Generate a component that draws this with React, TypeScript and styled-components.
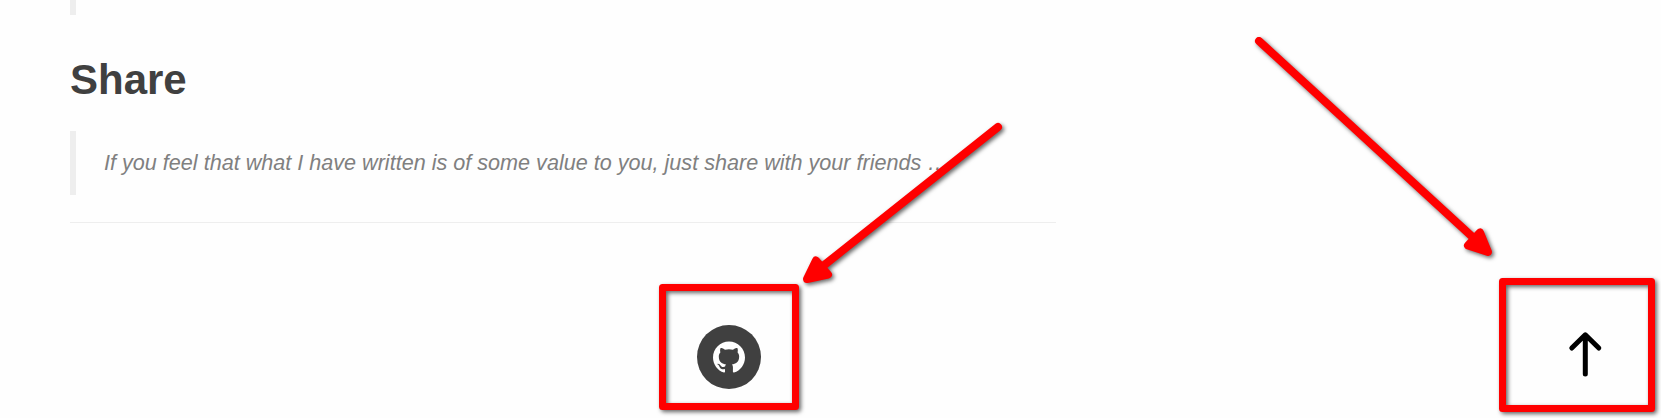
import React from "react";
import styled, { createGlobalStyle } from "styled-components";

const GlobalStyle = createGlobalStyle`
  body {
    margin: 0;
    background: #fefefe;
    color: #404040;
    font-family: "Liberation Sans", Arial, sans-serif;
    overflow: hidden;
  }
`;

const Page = styled.div`
  position: relative;
  box-sizing: border-box;
  height: 418px;
  padding-left: 70px;
  overflow: hidden;
`;

const Article = styled.main`
  display: flex;
  flex-direction: column;
  width: 986px;
`;

const Quote = styled.blockquote<{ $height: number }>`
  display: flex;
  align-items: center;
  box-sizing: border-box;
  height: ${(p) => p.$height}px;
  margin: 0;
  padding: 0 0 0 28px;
  border-left: 6px solid #eee;
  color: #808080;
  font-size: 21.6px;
  font-style: italic;
  line-height: 32px;
  white-space: nowrap;
`;

const Heading = styled.h1`
  margin: 40px 0 27px;
  font-size: 42px;
  line-height: 49px;
  font-weight: 700;
`;

const Divider = styled.hr`
  width: 100%;
  height: 1px;
  margin: 27px 0 0;
  border: 0;
  background: #eee;
`;

const Footer = styled.footer`
  display: flex;
  justify-content: center;
  padding: 102px 0 0 332px;
  width: 654px;
`;

const SocialLink = styled.a`
  display: flex;
  align-items: center;
  justify-content: center;
  width: 64px;
  height: 64px;
  border-radius: 50%;
  background: #404040;
  color: #fff;
`;

const TopButton = styled.a`
  position: absolute;
  left: 1565px;
  top: 328px;
  display: block;
  width: 40px;
  height: 52px;
`;

const Annotations = styled.svg`
  position: absolute;
  inset: 0;
  filter: drop-shadow(2px 2px 2px rgba(0, 0, 0, 0.6));
  pointer-events: none;
`;

const GithubMark = () => (
  <svg width="32" height="32" viewBox="0 0 24 24" fill="currentColor">
    <path d="M12 .297c-6.63 0-12 5.373-12 12 0 5.303 3.438 9.8 8.205 11.385.6.113.82-.258.82-.577 0-.285-.01-1.04-.015-2.04-3.338.724-4.042-1.61-4.042-1.61C4.422 18.07 3.633 17.7 3.633 17.7c-1.087-.744.084-.729.084-.729 1.205.084 1.838 1.236 1.838 1.236 1.07 1.835 2.809 1.305 3.495.998.108-.776.417-1.305.76-1.605-2.665-.3-5.466-1.332-5.466-5.93 0-1.31.465-2.38 1.235-3.22-.135-.303-.54-1.523.105-3.176 0 0 1.005-.322 3.3 1.23.96-.267 1.98-.399 3-.405 1.02.006 2.04.138 3 .405 2.28-1.552 3.285-1.23 3.285-1.23.645 1.653.24 2.873.12 3.176.765.84 1.23 1.91 1.23 3.22 0 4.61-2.805 5.625-5.475 5.92.42.36.81 1.096.81 2.22 0 1.606-.015 2.896-.015 3.286 0 .315.21.69.825.57C20.565 22.092 24 17.592 24 12.297c0-6.627-5.373-12-12-12" />
  </svg>
);

export default function App() {
  return (
    <Page>
      <GlobalStyle />
      <Article>
        <Quote $height={15} />
        <Heading>Share</Heading>
        <Quote $height={64}>
          If you feel that what I have written is of some value to you, just share with your friends …
        </Quote>
        <Divider />
        <Footer>
          <SocialLink aria-label="GitHub">
            <GithubMark />
          </SocialLink>
        </Footer>
      </Article>
      <TopButton aria-label="Back to top">
        <svg width="40" height="52" fill="none" stroke="#000" strokeWidth="5" strokeLinecap="round" strokeLinejoin="round">
          <path d="M20.3 46V7M6.8 20L20.3 6.8L33.8 20" />
        </svg>
      </TopButton>
      <Annotations width="1661" height="418" fill="none" stroke="#f00" strokeLinejoin="round" strokeLinecap="round">
        <rect x="662.5" y="287.5" width="133" height="119" strokeWidth="7" />
        <rect x="1502.5" y="281.5" width="149" height="127" strokeWidth="7" />
        <g strokeWidth="8">
          <path d="M998 127L818 270" />
          <path fill="#f00" d="M807 279L816 260.5L828 274.5Z" />
          <path d="M1259 41L1478 242" />
          <path fill="#f00" d="M1488 252L1480 232.5L1468 245.5Z" />
        </g>
      </Annotations>
    </Page>
  );
}
